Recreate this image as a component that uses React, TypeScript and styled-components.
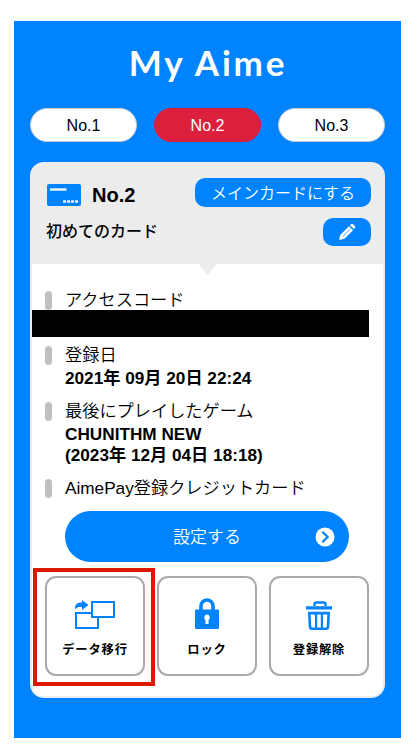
import React from 'react';
import styled, { createGlobalStyle } from 'styled-components';

const BLUE = '#0083ff';
const GREY = '#ececec';

const GlobalStyle = createGlobalStyle`
  * { box-sizing: border-box; }
  body {
    margin: 0;
    background: #fff;
    color: #000;
    font-family: "Liberation Sans", "Noto Sans CJK JP", sans-serif;
  }
  button { font: inherit; margin: 0; padding: 0; border: 0; white-space: nowrap; }
`;

const Screen = styled.main`
  width: 387px;
  height: 717px;
  margin: 21px 0 18px 14px;
  padding: 21px 16px 0;
  background: ${BLUE};
`;

const Title = styled.h1`
  margin: 0;
  height: 66px;
  padding-left: 1px;
  text-align: center;
  color: #fff;
  font: 700 35px/40px Lato, sans-serif;
  letter-spacing: 2.8px;
`;

const Tabs = styled.nav`
  display: flex;
  justify-content: space-between;
`;

const Tab = styled.button<{ $active?: boolean }>`
  width: 107px;
  height: 34px;
  padding-top: 1px;
  border: 1px solid ${(p) => (p.$active ? '#dc1f3c' : '#c9ccd2')};
  border-radius: 17px;
  background: ${(p) => (p.$active ? '#dc1f3c' : '#fff')};
  color: ${(p) => (p.$active ? '#fff' : '#000')};
  font-size: 16px;
  line-height: 31px;
`;

const Card = styled.section`
  height: 536px;
  margin-top: 20px;
  border: 2px solid ${GREY};
  border-radius: 14px;
  background: #fff;
  overflow: hidden;
`;

const CardHeader = styled.header`
  height: 100px;
  padding: 14px 12px 0 14px;
  background: ${GREY};
`;

const HeaderRow = styled.div<{ $height: number }>`
  display: flex;
  align-items: center;
  justify-content: space-between;
  height: ${(p) => p.$height}px;
`;

const CardNumber = styled.h2`
  display: flex;
  align-items: center;
  gap: 11px;
  margin: 5px 0 0 1px;
  font-size: 20px;
  line-height: 24px;
`;

const CardName = styled.p`
  margin: 0;
  padding-bottom: 4px;
  font-size: 16px;
  font-weight: 500;
`;

const SmallButton = styled.button<{ $width: number; $height: number }>`
  display: flex;
  align-items: center;
  justify-content: center;
  width: ${(p) => p.$width}px;
  height: ${(p) => p.$height}px;
  border-radius: 10px;
  background: ${BLUE};
  color: #fff;
  font-size: 16px;
  font-weight: 350;

  span { padding-bottom: 2px; }
`;

const Notch = styled.div`
  width: 18px;
  height: 11px;
  margin: 0 auto;
  background: ${GREY};
  clip-path: polygon(0 0, 100% 0, 50% 100%);
`;

const Details = styled.dl`
  margin: 0;
  padding: 14px 0 0;
`;

const Label = styled.dt`
  display: flex;
  align-items: center;
  gap: 13px;
  height: 22px;
  padding-left: 13px;
  font-size: 17.2px;
  font-weight: 350;
  line-height: 22px;
  white-space: nowrap;

  &::before {
    content: '';
    width: 7px;
    height: 19px;
    margin-top: 1px;
    border-radius: 3.5px;
    background: #c0c0c0;
  }
`;

const Value = styled.dd`
  margin: 0 0 11px 33px;
  padding-top: 2px;
  font-size: 17.2px;
  font-weight: 700;
  line-height: 21px;
  white-space: nowrap;
`;

const Redacted = styled.dd`
  width: 337px;
  height: 27px;
  margin: -1px 0 7px;
  background: #000;
`;

const SetButton = styled.button`
  display: grid;
  grid-template-columns: 48px 1fr 48px;
  align-items: center;
  width: 284px;
  height: 51px;
  margin: 12px 0 0 33px;
  border-radius: 26px;
  background: ${BLUE};
  color: #fff;
  font-size: 17px;
  font-weight: 350;

  span { grid-column: 2; padding-bottom: 2px; }
  svg { justify-self: center; }
`;

const Actions = styled.div`
  display: flex;
  gap: 12px;
  margin: 14px 0 0 13px;
`;

const Tile = styled.button`
  position: relative;
  display: flex;
  flex-direction: column;
  align-items: center;
  width: 100px;
  height: 100px;
  padding-top: 17px;
  border: 2px solid #a9a9a9;
  border-radius: 11px;
  background: #fff;
  font-size: 12.3px;
  font-weight: 600;
  letter-spacing: 0.8px;

  span { margin-top: 5px; line-height: 20px; }
`;

const Highlight = styled.i`
  position: absolute;
  inset: -10px -12px -12px -14px;
  border: 4px solid #dd1700;
`;

const CreditCardIcon = () => (
  <svg width="34" height="22" viewBox="0 0 34 22">
    <rect width="34" height="22" rx="2" fill={BLUE} />
    <path d="M3 5.500h16.500M16 17.500h3M20 17.500h3M24 17.500h3M28 17.500h3" stroke="#fff" strokeWidth="2.500" opacity=".9" />
  </svg>
);

const PencilIcon = () => (
  <svg width="18" height="18" viewBox="0 0 18 18">
    <path d="M1 17l1.400-5.200L11 3.200l4.100 4.100-8.700 8.500z" fill="#fff" />
    <path d="M12 2.300L13.300 1q.8-.6 1.500 0l2.300 2.300q.6.800 0 1.500L15.900 6z" fill="#fff" />
    <path d="M5 13.300l7.500-7.400" stroke={BLUE} strokeWidth=".7" fill="none" />
  </svg>
);

const ArrowCircleIcon = () => (
  <svg width="20" height="20" viewBox="0 0 20 20">
    <circle cx="10" cy="10" r="9.500" fill="#fff" />
    <path d="M7.300 4.800L12.600 10l-5.300 5.200" fill="none" stroke={BLUE} strokeWidth="2.200" />
  </svg>
);

const TransferIcon = () => (
  <svg width="42" height="40" viewBox="0 0 42 40">
    <g fill="#fff" stroke={BLUE} strokeWidth="2">
      <path d="M2 18h22v15H2z" />
      <path d="M18 7h22v15H18z" />
    </g>
    <path d="M1 13.500C1 8.500 4.500 7.300 8 7.500V5l6.500 5L8 15v-2.800c-3-.3-5-.1-7 2.300z" fill={BLUE} />
  </svg>
);

const LockIcon = () => (
  <svg width="42" height="40" viewBox="0 0 42 40">
    <path d="M15 17v-6a6 6 0 0 1 12 0v6" fill="none" stroke={BLUE} strokeWidth="3.600" />
    <rect x="9" y="14.500" width="24" height="19.500" rx="1" fill={BLUE} />
    <path d="M21 19.500a3 3 0 0 1 1.600 5.400v4.100h-3.200v-4.100A3 3 0 0 1 21 19.500z" fill="#fff" />
  </svg>
);

const TrashIcon = () => (
  <svg width="42" height="40" viewBox="-1 0 42 40" fill="none" stroke={BLUE}>
    <path d="M15.500 11V8.800q0-1.300 2-1.300h7q2 0 2 1.300V11" strokeWidth="2.400" />
    <path d="M7 12.900h26" strokeWidth="3.200" />
    <path d="M10.300 18.100h19.400l-.7 13.700q-.1 2-2 2H13q-1.900 0-2-2z" strokeWidth="2.600" />
    <path d="M17.100 18v16M22.900 18v16" strokeWidth="2.200" />
  </svg>
);

export default function App() {
  return (
    <>
      <GlobalStyle />
      <Screen lang="ja">
        <Title>My Aime</Title>
        <Tabs>
          <Tab>No.1</Tab>
          <Tab $active>No.2</Tab>
          <Tab>No.3</Tab>
        </Tabs>
        <Card>
          <CardHeader>
            <HeaderRow $height={29}>
              <CardNumber>
                <CreditCardIcon />
                No.2
              </CardNumber>
              <SmallButton $width={176} $height={29}>
                <span>メインカードにする</span>
              </SmallButton>
            </HeaderRow>
            <HeaderRow $height={50}>
              <CardName>初めてのカード</CardName>
              <SmallButton $width={48} $height={28} aria-label="編集">
                <PencilIcon />
              </SmallButton>
            </HeaderRow>
          </CardHeader>
          <Notch />
          <Details>
            <Label>アクセスコード</Label>
            <Redacted />
            <Label>登録日</Label>
            <Value>2021年 09月 20日 22:24</Value>
            <Label>最後にプレイしたゲーム</Label>
            <Value>
              CHUNITHM NEW
              <br />
              (2023年 12月 04日 18:18)
            </Value>
            <Label>AimePay登録クレジットカード</Label>
          </Details>
          <SetButton>
            <span>設定する</span>
            <ArrowCircleIcon />
          </SetButton>
          <Actions>
            <Tile>
              <TransferIcon />
              <span>データ移行</span>
              <Highlight />
            </Tile>
            <Tile>
              <LockIcon />
              <span>ロック</span>
            </Tile>
            <Tile>
              <TrashIcon />
              <span>登録解除</span>
            </Tile>
          </Actions>
        </Card>
      </Screen>
    </>
  );
}
